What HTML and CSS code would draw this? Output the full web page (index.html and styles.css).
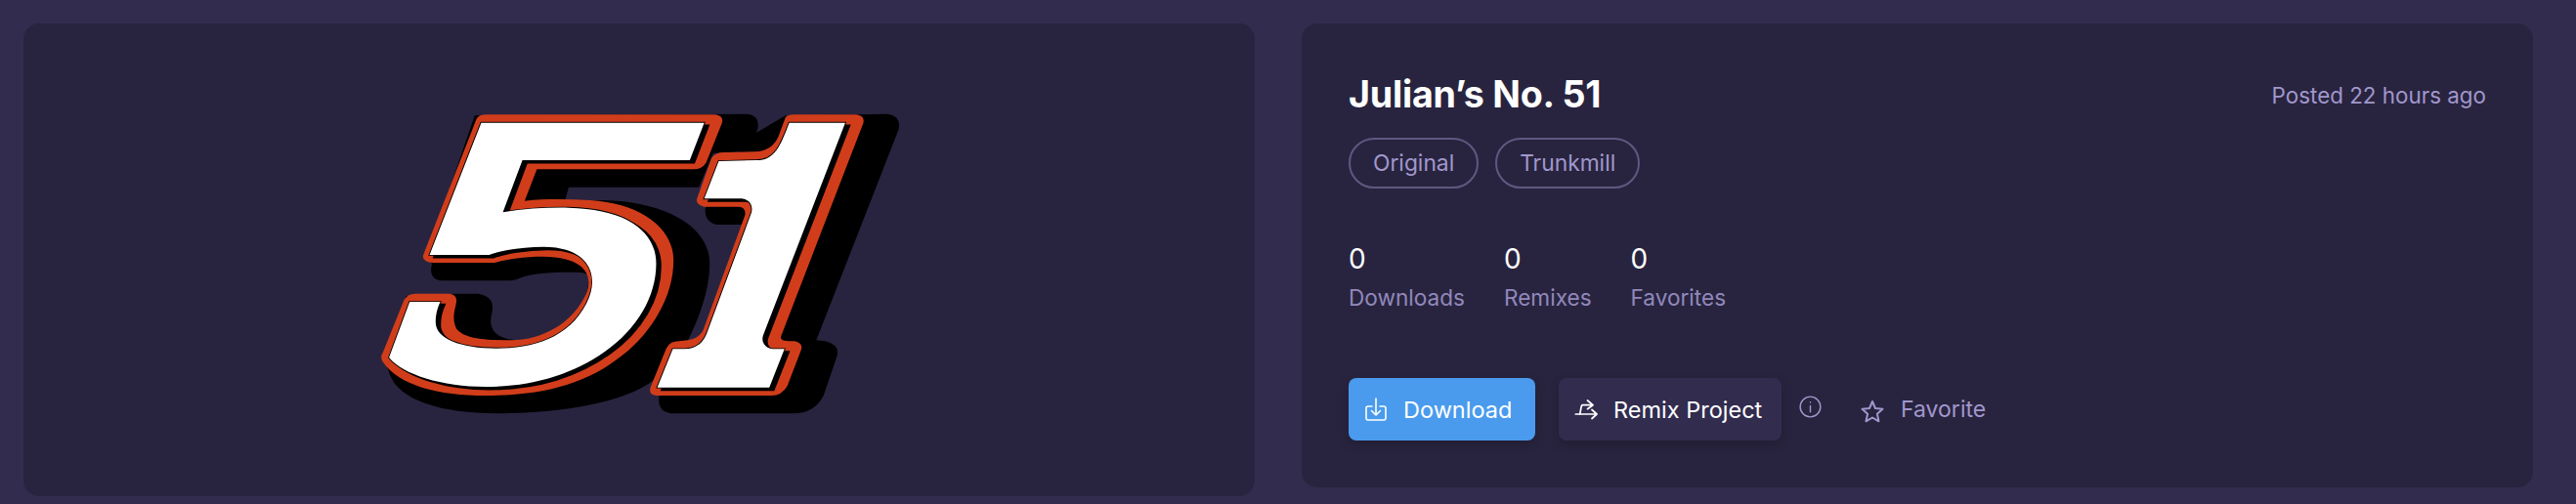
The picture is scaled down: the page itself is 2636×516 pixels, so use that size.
FILE: index.html
```html
<!DOCTYPE html>
<html lang="en">
<head>
<meta charset="utf-8">
<title>Julian's No. 51</title>
<link rel="stylesheet" href="styles.css">
</head>
<body>
<main class="page">
  <section class="card preview">
    <svg class="logo" viewBox="0 0 1568 1050" preserveAspectRatio="none" xmlns="http://www.w3.org/2000/svg" aria-label="51">
      <defs>
        <path id="w5" d="M358 107 L975 107 L935 222 L472 222 L418 382 C480 370 540 367 600 368 C760 372 842 440 842 540 C842 640 790 740 700 810 C610 880 500 918 370 918 C250 918 140 880 103 828 L160 657 L245 657 C235 680 232 700 232 720 C232 770 300 800 400 800 C500 800 600 770 650 660 C690 570 650 488 530 488 C470 488 410 500 380 513 L215 513 Z"/>
        <path id="w1" d="M1210 107 L1365 107 L1138 760 C1130 785 1150 802 1165 802 L1197 802 L1155 920 L845 920 L888 802 L920 802 C955 802 975 780 985 745 L1105 385 C1112 362 1100 340 1075 340 L975 340 L1015 225 L1120 222 C1170 222 1185 180 1210 107 Z"/>
      </defs>
      <path class="ink" d="M340 85 L1095 80 Q1132 85 1122 130 L1100 195 L1000 200 L960 305 L600 305 L590 345 L700 345 C860 350 990 420 990 540 C990 620 960 710 930 775 L850 880 C800 950 620 1000 400 1000 C250 1000 130 960 105 880 L90 830 L150 640 L290 632 L350 632 C390 640 392 665 388 690 C378 730 385 775 470 775 C570 775 640 700 655 600 C658 575 650 567 630 567 C560 565 500 570 470 582 C450 592 440 592 420 592 L250 592 C220 590 215 565 222 540 L205 520 Z"/>
      <path class="ink" d="M1200 85 L1480 80 Q1522 85 1512 130 L1285 775 L1310 778 Q1352 790 1342 825 L1305 945 Q1280 1000 1220 1000 L885 1000 Q845 995 850 950 L870 800 L985 770 L1090 420 L1010 420 Q975 412 978 370 L1100 150 Z"/>
      <path class="red" d="M345 95 Q352 82 372 82 L1005 82 Q1030 85 1024 108 L980 230 Q968 250 945 250 L512 250 L478 347 C540 340 600 342 660 345 C800 355 890 430 890 530 C890 640 830 750 750 820 C650 910 530 945 370 945 C240 945 130 915 85 840 Q78 825 85 815 L145 650 Q155 632 175 632 L270 632 Q295 635 288 665 C280 700 280 720 290 740 C310 770 370 775 440 775 C530 775 610 720 645 640 C668 590 660 520 530 518 C470 518 430 526 395 537 L225 537 Q195 535 197 515 Z"/>
      <path class="red" d="M1200 90 Q1205 82 1225 82 L1395 82 Q1420 85 1415 108 L1190 755 C1180 775 1195 778 1225 778 Q1250 785 1243 805 L1205 915 Q1190 945 1160 945 L845 945 Q820 945 826 920 L870 800 Q880 778 905 778 L930 775 C955 770 970 755 975 735 L1088 390 Q1090 365 1070 365 L975 365 Q950 358 955 340 L995 215 Q1005 198 1030 198 L1115 196 C1150 195 1170 175 1180 150 Z"/>
      <use href="#w5" class="edge"/>
      <use href="#w1" class="edge"/>
      <use href="#w5" class="edge" transform="translate(12 8)"/>
      <use href="#w1" class="edge" transform="translate(12 8)"/>
      <use href="#w5" class="paper"/>
      <use href="#w1" class="paper"/>
    </svg>
  </section>
  <section class="card details">
    <header class="head">
      <div>
        <h1 class="title">Julian’s No. 51</h1>
        <ul class="tags">
          <li class="tag">Original</li>
          <li class="tag">Trunkmill</li>
        </ul>
      </div>
      <p class="posted">Posted 22 hours ago</p>
    </header>
    <dl class="stats">
      <div class="stat"><dd class="num">0</dd><dt class="label">Downloads</dt></div>
      <div class="stat"><dd class="num">0</dd><dt class="label">Remixes</dt></div>
      <div class="stat"><dd class="num">0</dd><dt class="label">Favorites</dt></div>
    </dl>
    <div class="actions">
      <button class="btn primary">
        <svg class="ico" viewBox="0 0 24 24" fill="none" stroke="currentColor" stroke-width="1.6" stroke-linecap="round" stroke-linejoin="round"><path d="M8 9H4a2 2 0 0 0-2 2v10a2 2 0 0 0 2 2h16a2 2 0 0 0 2-2V11a2 2 0 0 0-2-2h-4"/><path d="M12 1v17M7.500 13.500l4.500 4.500 4.500-4.500"/></svg>
        Download
      </button>
      <button class="btn secondary">
        <svg class="ico" viewBox="0 0 24 24" fill="none" stroke="currentColor" stroke-width="1.7" stroke-linecap="round" stroke-linejoin="round"><path d="M1.300 17H23M18 12.500l5 4.500-5 4.500"/><path d="M5.700 17L7.200 9q.2-1.300 1.500-1.300H19M13.500 3l5.500 4.700-5.500 4"/></svg>
        Remix Project
      </button>
      <svg class="info" viewBox="0 0 24 24" fill="none" stroke="currentColor" stroke-width="1.5" stroke-linecap="round"><circle cx="12" cy="12" r="10.800"/><path d="M12 11v6.500M12 7v.4"/></svg>
      <button class="btn ghost">
        <svg class="ico star" viewBox="0 0 24 24" fill="none" stroke="currentColor" stroke-width="2" stroke-linejoin="round"><path d="M12 2l3 7 7.500.8-5.600 5 1.600 7.500L12 18.500l-6.500 3.800 1.600-7.500-5.600-5L9 9z"/></svg>
        Favorite
      </button>
    </div>
  </section>
</main>
</body>
</html>
```
FILE: styles.css
```css
* { box-sizing: border-box; }
html, body { margin: 0; height: 100%; }
body {
  background: #322c4f;
  color: #fff;
  font-family: "Inter", "Liberation Sans", sans-serif;
  overflow: hidden;
}
.page {
  display: grid;
  grid-template-columns: 1260px 1260px;
  gap: 48px;
  padding: 24px 44px 0 24px;
  align-items: start;
}
.card { background: #28243f; border-radius: 16px; }
.preview {
  height: 484px;
  display: flex;
  padding: 66px 0 0 336px;
}
.logo { display: block; width: 580px; height: 350px; }
.ink { fill: #000; }
.red { fill: #d13d1a; }
.edge { fill: #000; stroke: #000; stroke-width: 5; }
.paper { fill: #fff; }
.details { height: 475px; padding: 48px; }
.head { display: flex; justify-content: space-between; align-items: flex-start; }
.title { margin: 3px 0 0; font-size: 37.6px; line-height: 44px; font-weight: 700; letter-spacing: -0.2px; white-space: nowrap; }
.tags { list-style: none; display: flex; gap: 17px; margin: 22px 0 0; padding: 0; }
.tag {
  height: 52px;
  line-height: 48px;
  padding: 0 23px;
  border: 2px solid #5f5880;
  border-radius: 26px;
  font-size: 22.8px;
  color: #a197cc;
}
.posted { margin: 0; padding-top: 9px; font-size: 22.4px; line-height: 34px; color: #a197cc; }
.stats { display: flex; gap: 40px; margin: 54px 0 0; }
.stat { display: flex; flex-direction: column; }
.num { margin: 0; font-size: 28px; line-height: 36px; }
.label { margin-top: 7px; font-size: 22.6px; line-height: 30px; color: #9288bb; }
.actions { display: flex; align-items: center; margin-top: 67px; height: 64px; }
.btn {
  display: flex;
  align-items: center;
  height: 64px;
  border: 0;
  border-radius: 8px;
  font: inherit;
  font-size: 23.5px;
  color: #fff;
  padding: 0 16px;
  gap: 16px;
  white-space: nowrap;
}
.primary { background: #4a9bed; width: 191px; box-shadow: 0 4px 12px rgba(0,0,0,.2); }
.secondary { background: #322c4f; margin-left: 24px; width: 228px; box-shadow: 0 4px 12px rgba(0,0,0,.2); }
.ghost { background: none; color: #a197cc; padding: 0; margin-left: 40px; gap: 17px; font-size: 23px; }
.ico { width: 24px; height: 24px; flex: none; }
.star { margin-top: 4px; }
.info { width: 23px; height: 23px; margin: -6px 0 0 18px; color: #a197cc; flex: none; }
```
